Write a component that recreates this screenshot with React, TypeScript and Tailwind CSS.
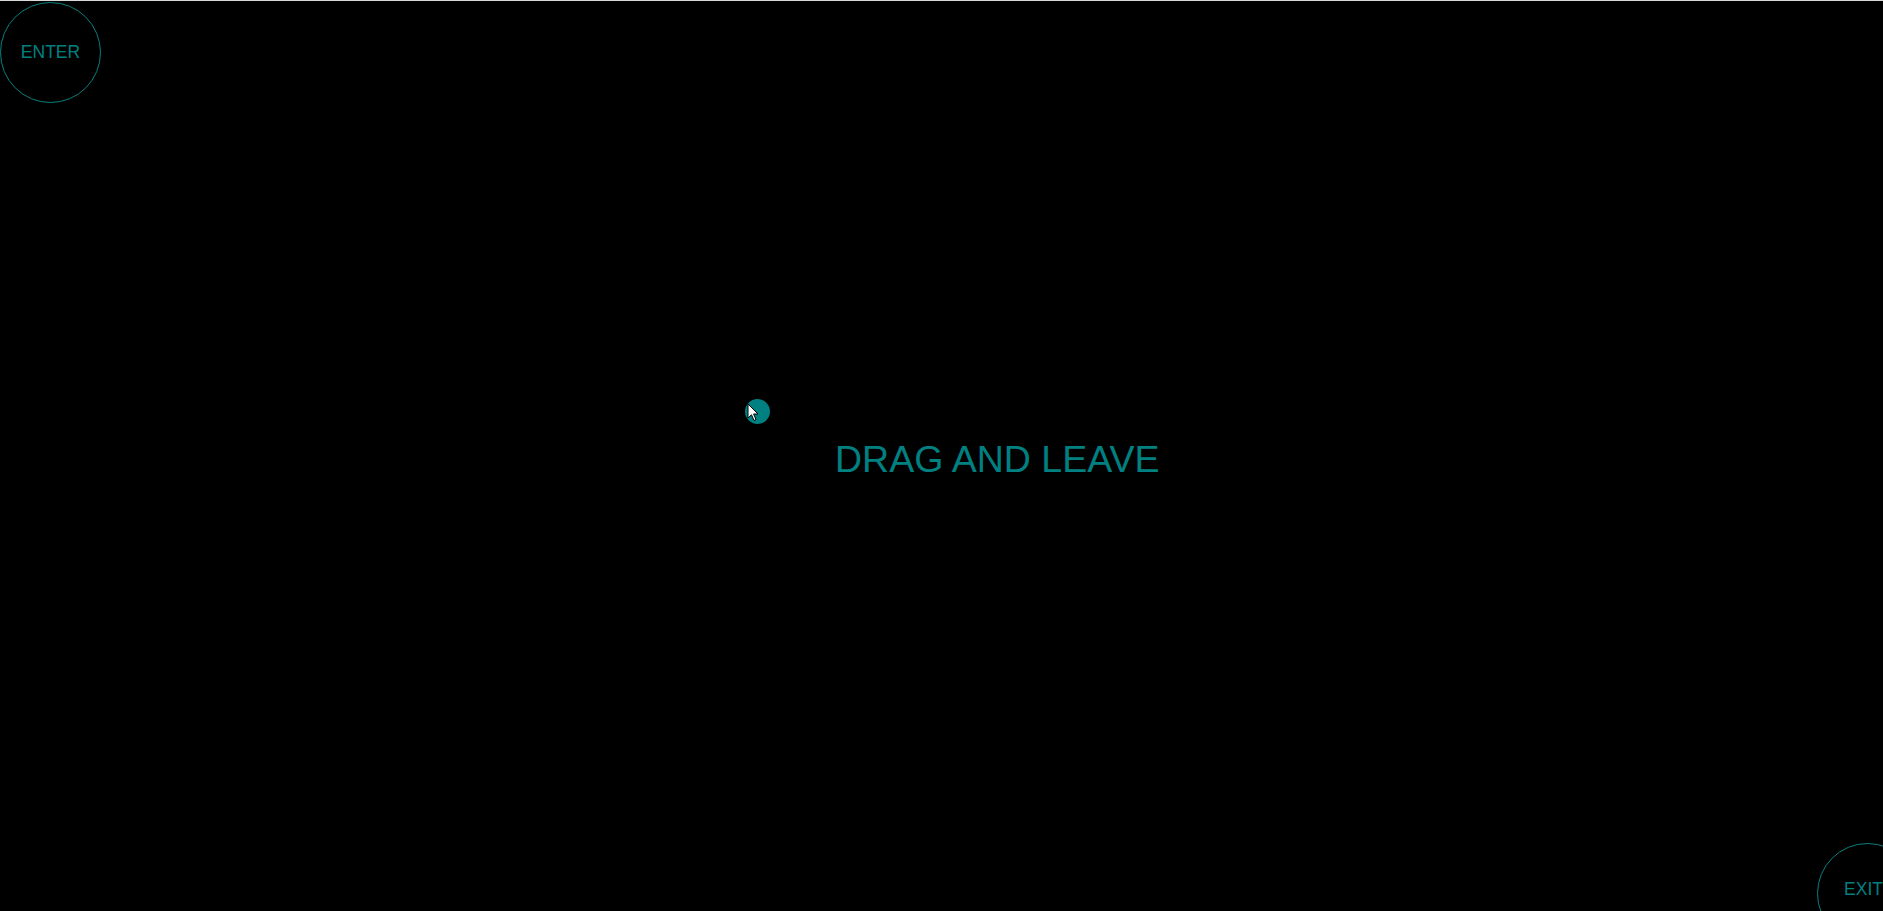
export default function App() {
  return (
    <main
      className="relative h-[911px] w-full overflow-hidden border-t border-[#d9d9d9] bg-black text-[#008080]"
      style={{ fontFamily: '"Liberation Sans", Arial, sans-serif' }}
    >
      {/* enter zone */}
      <div className="absolute left-0 top-[1px] flex h-[101px] w-[101px] items-center justify-center rounded-full border-[1.5px] border-[#0a7f7f] text-[17.5px]">
        ENTER
      </div>

      {/* draggable dot */}
      <div className="absolute left-[745px] top-[398px] h-[25px] w-[25px] rounded-full bg-[#008080]" />
      <svg
        className="absolute left-[747px] top-[402px]"
        width="12"
        height="19"
        viewBox="0 0 12 19"
      >
        <path
          d="M1 1 L1 15 L4.5 11.8 L7 17.5 L9 16.6 L6.6 11 L11 11 Z"
          fill="#fff"
          stroke="#000"
          strokeWidth="1"
          strokeLinejoin="round"
        />
      </svg>

      <div className="absolute left-[835px] top-[437px] text-[37.5px] leading-[42px]">
        DRAG AND LEAVE
      </div>

      {/* exit zone */}
      <div className="absolute left-[1817px] top-[842px] flex h-[101px] w-[101px] items-center justify-center rounded-full border-[1.5px] border-[#0a7f7f] text-[17.5px]">
        <span className="-ml-2 -mt-2">EXIT</span>
      </div>
    </main>
  );
}
